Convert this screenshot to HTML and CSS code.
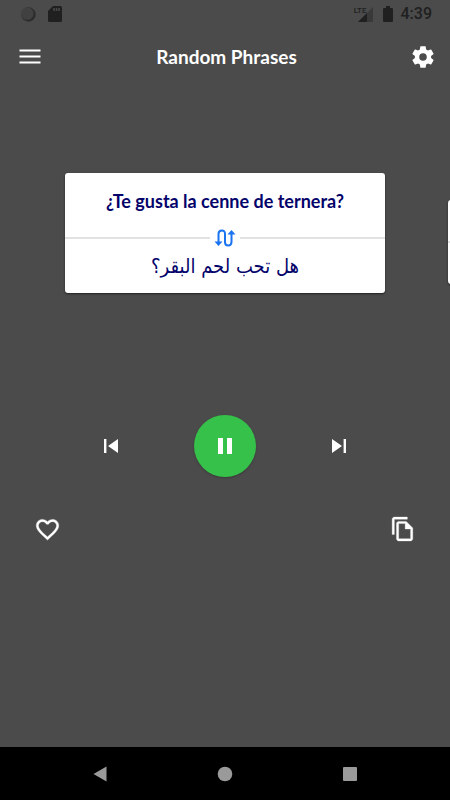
FILE: index.html
```html
<!DOCTYPE html>
<html lang="en">
<head>
<meta charset="utf-8">
<meta name="viewport" content="width=device-width, initial-scale=1">
<title>Random Phrases</title>
<link rel="stylesheet" href="styles.css">
</head>
<body>
<div class="status">
  <svg width="16" height="16" viewBox="0 0 16 16" aria-hidden="true"><circle cx="8.5" cy="8.5" r="7.2" fill="#2c2c2c"/><circle cx="7.3" cy="7.5" r="6.3" fill="#414141"/></svg>
  <svg width="14" height="16" viewBox="0 0 14 16" aria-hidden="true"><path fill="#202020" d="M5 0h7.500q1.500 0 1.500 1.500v13q0 1.500-1.500 1.500h-11Q0 16 0 14.500V5z"/><path stroke="#4b4b4b" stroke-width="1.500" d="M6 2v3M8.500 2v3M11 2v3"/></svg>
  <div class="signal"><span class="lte">LTE</span><svg width="15" height="15" viewBox="0 0 15 15" aria-hidden="true"><path fill="#393939" d="M15 0v15H0z"/><path fill="#202020" d="M9 6v9H0z"/></svg></div>
  <svg width="10" height="16" viewBox="0 0 10 16" aria-hidden="true"><path fill="#202020" d="M3 0h4v2h2q1 0 1 1v12q0 1-1 1H1q-1 0-1-1V3q0-1 1-1h2z"/></svg>
  <span class="clock">4:39</span>
</div>
<header class="appbar">
  <button class="icon-button" type="button" aria-label="Menu"><svg width="22" height="22" viewBox="0 0 22 22"><path stroke="#fff" stroke-width="2" d="M.5 4.500h21M.5 10.500h21M.5 16.500h21"/></svg></button>
  <h1>Random Phrases</h1>
  <button class="icon-button" type="button" aria-label="Settings"><svg width="26" height="26" viewBox="0 0 24 24"><path fill="#fff" d="M19.430 12.980c.04-.32.070-.64.070-.98s-.03-.66-.07-.98l2.110-1.650c.19-.15.24-.42.120-.64l-2-3.460c-.12-.22-.39-.3-.61-.22l-2.490 1c-.52-.4-1.080-.73-1.690-.98l-.38-2.650A.488.488 0 0 0 14 2h-4c-.25 0-.46.180-.49.420l-.38 2.650c-.61.250-1.170.590-1.690.980l-2.490-1c-.23-.09-.49 0-.61.220l-2 3.460c-.13.220-.07.490.120.640l2.110 1.650c-.04.320-.07.650-.07.980s.03.660.070.980l-2.110 1.650c-.19.150-.24.420-.12.640l2 3.460c.12.220.39.300.61.220l2.490-1c.52.400 1.080.730 1.690.980l.38 2.650c.03.240.24.420.490.420h4c.25 0 .46-.18.490-.42l.38-2.650c.61-.25 1.170-.59 1.690-.98l2.490 1c.23.090.49 0 .61-.22l2-3.460c.12-.22.070-.49-.12-.64zM12 15.500a3.500 3.500 0 1 1 0-7 3.500 3.500 0 0 1 0 7z"/></svg></button>
</header>
<main>
  <section class="carousel" aria-label="Phrases">
    <article class="card">
      <p class="phrase">¿Te gusta la cenne de ternera?</p>
      <div class="divider"><svg width="22" height="18" viewBox="0 0 22 18" fill="none" stroke="#1a73f0" stroke-width="2" aria-hidden="true"><path d="M4.500 15V5q0-3.500 3.300-3.500T11 5v8q0 3.500 3.200 3.500t3.300-3.500V3"/><path fill="#1a73f0" stroke="none" d="M.5 12.500h8l-4 4.500zM13.500 5.500h8l-4-4.500z"/></svg></div>
      <p class="translation" lang="ar" dir="rtl">هل تحب لحم البقر؟</p>
    </article>
    <article class="card next" aria-hidden="true"><div class="divider"></div></article>
  </section>
  <div class="player">
    <button class="icon-button" type="button" aria-label="Previous"><svg width="14" height="14" viewBox="0 0 14 14"><path fill="#fff" d="M0 0h2.400v14H0zM14 0v14L4 7z"/></svg></button>
    <button class="play" type="button" aria-label="Pause"><svg width="14" height="16" viewBox="0 0 14 16"><path fill="#fff" d="M0 0h5v16H0zM9 0h5v16H9z"/></svg></button>
    <button class="icon-button" type="button" aria-label="Next"><svg width="14" height="14" viewBox="0 0 14 14"><path fill="#fff" d="M11.600 0H14v14h-2.400zM0 0v14l10-7z"/></svg></button>
  </div>
  <div class="actions">
    <button class="icon-button" type="button" aria-label="Favorite"><svg width="27" height="27" viewBox="0 0 24 24"><path fill="#fff" stroke="#fff" stroke-width=".3" d="M16.500 3c-1.740 0-3.410.81-4.500 2.090C10.910 3.810 9.240 3 7.500 3 4.420 3 2 5.420 2 8.500c0 3.780 3.400 6.860 8.550 11.540L12 21.350l1.450-1.320C18.600 15.360 22 12.280 22 8.500 22 5.420 19.580 3 16.500 3zm-4.400 15.550l-.1.100-.1-.1C7.140 14.240 4 11.390 4 8.500 4 6.500 5.500 5 7.500 5c1.540 0 3.040.99 3.570 2.360h1.870C13.460 5.990 14.960 5 16.500 5c2 0 3.500 1.500 3.500 3.500 0 2.890-3.140 5.740-7.900 10.050z"/></svg></button>
    <button class="icon-button" type="button" aria-label="Copy"><svg width="26" height="26" viewBox="0 0 24 24"><path fill="#fff" stroke="#fff" stroke-width=".3" d="M16 1H4c-1.100 0-2 .9-2 2v14h2V3h12V1zm-1 4H8c-1.100 0-2 .9-2 2v14c0 1.100.9 2 2 2h11c1.100 0 2-.9 2-2V11l-6-6zM8 21V7h6v5h5v9H8z"/></svg></button>
  </div>
</main>
<nav class="system-nav" aria-label="System">
  <button type="button" aria-label="Back"><svg width="14" height="16" viewBox="0 0 14 16"><path fill="#9a9a9a" d="M13.500.5v15L.5 8z"/></svg></button>
  <button type="button" aria-label="Home"><svg width="16" height="16" viewBox="0 0 16 16"><circle cx="8" cy="8" r="7.300" fill="#9a9a9a"/></svg></button>
  <button type="button" aria-label="Recent apps"><svg width="14" height="14" viewBox="0 0 14 14"><rect width="14" height="14" rx="1" fill="#9a9a9a"/></svg></button>
</nav>
</body>
</html>
```
FILE: styles.css
```css
* { box-sizing: border-box; }
body {
  margin: 0;
  min-height: 100vh;
  display: flex;
  flex-direction: column;
  background: #4b4b4b;
  color: #fff;
  font-family: Lato, "Noto Sans", sans-serif;
}
h1, p { margin: 0; }
svg { display: block; }
button { border: 0; padding: 0; background: none; display: grid; place-items: center; cursor: pointer; }
.status {
  height: 28px;
  padding: 0 18px 0 20px;
  display: flex;
  align-items: center;
  gap: 12px;
  color: #202020;
}
.signal { margin-left: auto; margin-right: -2px; display: flex; align-items: center; }
.lte { font: 500 8px/8px Roboto, sans-serif; align-self: flex-start; margin-right: -9px; }
.clock { font: 500 16px/28px Roboto, sans-serif; margin-left: -4px; }
.appbar {
  height: 58px;
  padding: 0 7px 0 10px;
  display: flex;
  align-items: center;
  justify-content: space-between;
}
.appbar h1 { font-size: 19px; line-height: 24px; font-weight: 700; }
.icon-button { width: 40px; height: 40px; }
main { flex: 1; }
.carousel {
  margin-top: 83px;
  padding: 4px 0 4px 65px;
  display: flex;
  align-items: flex-end;
  gap: 63px;
  overflow: hidden;
}
.card {
  flex: 0 0 calc(100% - 65px);
  height: 120px;
  display: grid;
  grid-template-rows: 56px 18px 1fr;
  background: #fff;
  border-radius: 3px;
  box-shadow: 0 1px 2px #222;
  color: #04046b;
  text-align: center;
}
.phrase { font-size: 18px; line-height: 56px; font-weight: 700; }
.translation { font: 20px/38px "DejaVu Sans Condensed", "DejaVu Sans", sans-serif; }
.divider { display: flex; align-items: center; gap: 4px; }
.divider::before, .divider::after { content: ""; flex: 1; height: 2px; background: #e2e2e2; }
.next { height: 84px; margin-bottom: 9px; grid-template-rows: 1fr; }
.next .divider { gap: 0; }
.player {
  margin-top: 118px;
  padding: 0 91px;
  display: flex;
  align-items: center;
  justify-content: space-between;
}
.play { width: 62px; height: 62px; border-radius: 50%; background: #36c24a; box-shadow: 0 1px 2px #3a3a3a; }
.actions {
  margin-top: 32px;
  padding: 0 27px;
  display: flex;
  justify-content: space-between;
}
.system-nav {
  height: 53px;
  padding: 0 38px;
  display: grid;
  grid-template-columns: repeat(3, 1fr);
  background: #000;
}
```
